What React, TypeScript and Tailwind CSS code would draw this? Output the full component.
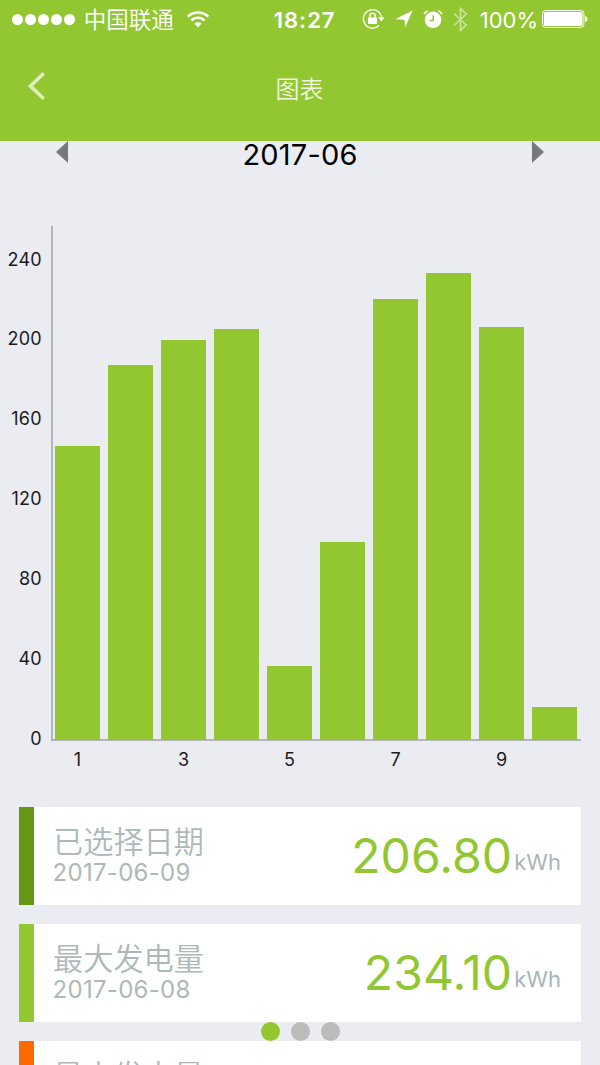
import clsx from "clsx";

const bars = [
  { day: 1, value: 147.1 },
  { day: 2, value: 187.8 },
  { day: 3, value: 200.1 },
  { day: 4, value: 205.8 },
  { day: 5, value: 36.9 },
  { day: 6, value: 98.8 },
  { day: 7, value: 220.9 },
  { day: 8, value: 234.1 },
  { day: 9, value: 206.8 },
  { day: 10, value: 16.3 },
];

const ticks = [240, 200, 160, 120, 80, 40, 0];

// px per kWh
const SCALE = 1.9945;

const cards = [
  { title: "已选择日期", date: "2017-06-09", value: "206.80", stripe: "bg-[#689713]" },
  { title: "最大发电量", date: "2017-06-08", value: "234.10", stripe: "bg-[#93c731]" },
  { title: "最小发电量", date: "2017-06-10", value: "16.30", stripe: "bg-[#ff6a00]" },
];

const StatusBar = () => (
  <div className="flex h-10 items-center text-white">
    <div className="-mt-px ml-3 flex gap-[2.2px]">
      {[1, 2, 3, 4, 5].map((n) => (
        <span key={n} className="size-[10.8px] rounded-full bg-white" />
      ))}
    </div>
    <span className="ml-[9px] w-[91px] text-[22.5px] leading-10 font-[350] whitespace-nowrap">中国联通</span>

    {/* wifi */}
    <svg className="-mt-[3px] ml-[11px] h-[18px] w-6" viewBox="0 0 24 18" fill="none" stroke="white">
      <path d="M1.7 6.7a14.6 14.6 0 0 1 20.6 0" strokeWidth="2.5" />
      <path d="M5.4 10.5a9.3 9.3 0 0 1 13.2 0" strokeWidth="2.5" />
      <path d="M8.3 13.6a5.2 5.2 0 0 1 7.4 0L12 17.3z" fill="white" stroke="none" />
    </svg>

    <span className="-mt-px ml-[64px] w-[64px] text-[22px] leading-10 font-semibold tracking-[1px] whitespace-nowrap">
      18:27
    </span>

    {/* rotation lock */}
    <svg className="-mt-[2px] ml-[24px] h-[22px] w-[23px]" viewBox="0 0 23 22" fill="none" stroke="white">
      <path d="M18.4 6A9.2 9.2 0 1 0 17 17.5M18.3 6a9 9 0 0 1 1.2 4" strokeWidth="1.3" />
      <path d="M16 9.3h6.6l-3.3 4.3z" fill="white" stroke="none" />
      <rect x="6" y="9.5" width="9" height="6.6" rx="0.6" fill="white" stroke="none" />
      <path d="M7.8 10.5V8a2.7 2.7 0 0 1 5.4 0v2.5" strokeWidth="1.5" />
    </svg>

    {/* location arrow */}
    <svg className="-mt-[2px] ml-[10px] h-[18px] w-[18px]" viewBox="0 0 18 18" fill="white">
      <path d="M17.6.5.3 9.2l9.2.5.6 7.8z" />
    </svg>

    {/* alarm */}
    <svg className="-mt-[2px] ml-[10px] h-5 w-5" viewBox="0 0 20 20" fill="none">
      <circle cx="10" cy="10.8" r="8.3" fill="white" />
      <path d="M1 5.2A7 7 0 0 1 4.7 1.7M19 5.2a7 7 0 0 0-3.7-3.5" stroke="white" strokeWidth="1.6" />
      <path d="M10.2 6.3v5.2H6.6" stroke="#93c731" strokeWidth="1.5" />
    </svg>

    {/* bluetooth */}
    <svg
      className="-mt-[2px] ml-[10px] h-[25px] w-[15px] opacity-50"
      viewBox="0 0 15 25"
      fill="none"
      stroke="white"
      strokeWidth="1.7"
    >
      <path d="M1 6.5 13.2 18 7.5 23.3V1.7L13.2 7 1 18.5" />
    </svg>

    <span className="-mt-px ml-[12px] w-[57px] text-[22px] leading-10 whitespace-nowrap">100%</span>

    {/* battery */}
    <svg className="-mt-[2px] ml-[5px] h-[18px] w-[47px]" viewBox="0 0 47 18" fill="none">
      <rect x="0.6" y="0.6" width="41.3" height="16.8" rx="3" stroke="white" strokeWidth="1" />
      <rect x="2" y="2" width="38.5" height="14" rx="1.5" fill="white" />
      <path d="M43.2 6c2.800.5 2.800 5.500 0 6z" fill="white" />
    </svg>
  </div>
);

const NavBar = () => (
  <div className="grid h-[100px] grid-cols-3 text-[#eef6dc]">
    <svg className="mt-8 ml-7 h-7 w-[17px]" viewBox="0 0 17 28" fill="none" stroke="#deefbd" strokeWidth="3.5">
      <path d="M15.8 1.3 2.5 14.1 15.8 26.8" />
    </svg>
    <h1 className="mt-[30px] -ml-px text-center text-2xl leading-10 font-[350]">图表</h1>
  </div>
);

const MonthPicker = () => (
  <div className="flex h-[45px] justify-between px-[56px]">
    <svg className="h-[22px] w-3" viewBox="0 0 12 22" fill="#767879">
      <path d="M12 0v22L0 11z" />
    </svg>
    <span className="-mt-[6px] text-[29px] leading-10 tracking-[0.2px] text-black">2017-06</span>
    <svg className="h-[22px] w-3" viewBox="0 0 12 22" fill="#767879">
      <path d="M0 0v22l12-11z" />
    </svg>
  </div>
);

const Chart = () => (
  <div className="mt-10 flex text-[18px] text-[#1b1b1d]">
    <div className="mt-[24px] mr-[9px] flex w-[42px] flex-col text-right tracking-[0.3px]">
      {ticks.map((t) => (
        <span key={t} className="h-[79.9px] leading-5 last:h-5">
          {t}
        </span>
      ))}
    </div>
    <div className="w-[530px]">
      <div className="flex h-[515px] items-end border-b-2 border-l-2 border-[#b4b5b9] pl-[2.2px]">
        {bars.map((b) => (
          <div
            key={b.day}
            className="mr-[7.8px] -mb-px w-[45.2px] shrink-0 bg-[#93c731]"
            style={{ height: b.value * SCALE }}
          />
        ))}
      </div>
      <div className="flex pt-[9px]">
        {bars.map((b) => (
          <span key={b.day} className="w-[53px] text-center leading-5">
            {b.day % 2 === 1 ? b.day : ""}
          </span>
        ))}
      </div>
    </div>
  </div>
);

const Card = ({ title, date, value, stripe }: (typeof cards)[number]) => (
  <div className="flex h-[98.5px] shrink-0 bg-white">
    <div className={clsx("w-[15px]", stripe)} />
    <div className="ml-[19px] pt-[19px] text-[#adb9b9]">
      <p className="text-[30.2px] leading-8 font-[350]">{title}</p>
      <p className="-ml-[0.5px] text-2xl leading-[30px] tracking-[0.3px]">{date}</p>
    </div>
    <div className="mr-5 ml-auto flex items-baseline pt-[19px]">
      <span className="text-[48px] leading-[60px] tracking-[0.1px] text-[#93c731]">{value}</span>
      <span className="ml-[2px] -translate-y-[3px] text-[22px] text-[#a9b5b6]">kWh</span>
    </div>
  </div>
);

const App = () => {
  return (
    <div className="relative h-[1065px] w-[600px] overflow-hidden bg-[#ebecf1] font-['Inter','Noto_Sans_CJK_SC',sans-serif]">
      <header className="h-[140.5px] bg-[#93c731]">
        <StatusBar />
        <NavBar />
      </header>
      <MonthPicker />
      <Chart />
      <div className="mt-[37px] flex flex-col gap-[18.7px] px-[19px]">
        {cards.map((c) => (
          <Card key={c.title} {...c} />
        ))}
      </div>

      {/* page dots float over the cards */}
      <div className="absolute bottom-[24.5px] left-[260.5px] flex gap-[11px]">
        <span className="size-[19px] rounded-full bg-[#93c731]" />
        <span className="size-[19px] rounded-full bg-[#bbbbbb]" />
        <span className="size-[19px] rounded-full bg-[#bbbbbb]" />
      </div>
    </div>
  );
};

export default App;
